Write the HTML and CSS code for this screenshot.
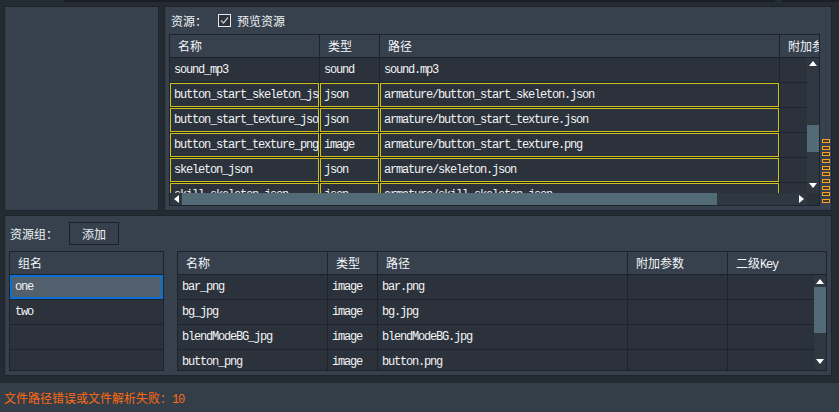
FILE: index.html
```html
<!DOCTYPE html>
<html lang="zh-CN">
<head>
<meta charset="utf-8">
<title>资源</title>
<link rel="stylesheet" href="styles.css">
</head>
<body>
<div class="topstrip"><span class="seg seg-a"></span><span class="seg seg-b"></span></div>
<div class="app">
  <div class="toprow">
    <div class="panel side"></div>
    <div class="panel res">
      <div class="res-head">
        <span class="label">资源：</span>
        <span class="check"><svg width="13" height="13" viewBox="0 0 13 13"><rect x="0.5" y="0.5" width="12" height="12" fill="#2b323b" stroke="#e8e8e8"/><polyline points="3,6.5 5.5,9 10,3.5" fill="none" stroke="#c8c8c8" stroke-width="1.2"/></svg></span>
        <span class="label">预览资源</span>
      </div>
      <div class="res-body">
        <div class="tbl tbl-res">
          <div class="thead">
            <div class="th r1">名称</div>
            <div class="th r2">类型</div>
            <div class="th r3">路径</div>
            <div class="th r4">附加参数</div>
          </div>
          <div class="tmain">
            <div class="rows">
              <div class="row"><div class="td r1 mono">sound_mp3</div><div class="td r2 mono">sound</div><div class="td r3 mono">sound.mp3</div><div class="td r4"></div></div>
              <div class="row hl"><div class="td r1 mono">button_start_skeleton_json</div><div class="td r2 mono">json</div><div class="td r3 mono">armature/button_start_skeleton.json</div><div class="td r4 plain"></div></div>
              <div class="row hl"><div class="td r1 mono">button_start_texture_json</div><div class="td r2 mono">json</div><div class="td r3 mono">armature/button_start_texture.json</div><div class="td r4 plain"></div></div>
              <div class="row hl"><div class="td r1 mono">button_start_texture_png</div><div class="td r2 mono">image</div><div class="td r3 mono">armature/button_start_texture.png</div><div class="td r4 plain"></div></div>
              <div class="row hl"><div class="td r1 mono">skeleton_json</div><div class="td r2 mono">json</div><div class="td r3 mono">armature/skeleton.json</div><div class="td r4 plain"></div></div>
              <div class="row hl"><div class="td r1 mono">skill_skeleton_json</div><div class="td r2 mono">json</div><div class="td r3 mono">armature/skill_skeleton.json</div><div class="td r4 plain"></div></div>
            </div>
            <div class="vscroll vs-res">
              <span class="arr-box"><span class="tri up"></span></span>
              <span class="vthumb"></span>
              <span class="fill"></span>
              <span class="arr-box"><span class="tri down"></span></span>
            </div>
          </div>
          <div class="hscroll">
            <span class="arr-box h"><span class="tri left"></span></span>
            <span class="hthumb"></span>
            <span class="fill"></span>
            <span class="arr-box h"><span class="tri right"></span></span>
            <span class="corner"></span>
          </div>
        </div>
        <div class="markers">
          <span></span><span></span><span></span><span></span><span></span>
          <span></span><span></span><span></span><span></span><span></span>
        </div>
      </div>
    </div>
  </div>

  <div class="panel groups">
    <div class="grp-head">
      <span class="label grp-label">资源组：</span>
      <button class="btn">添加</button>
    </div>
    <div class="grp-body">
      <div class="tbl tbl-grp">
        <div class="thead">
          <div class="th g1">组名</div>
        </div>
        <div class="rows">
          <div class="row"><div class="td g1 mono sel">one</div></div>
          <div class="row"><div class="td g1 mono">two</div></div>
          <div class="row"><div class="td g1"></div></div>
          <div class="row"><div class="td g1"></div></div>
        </div>
      </div>
      <div class="tbl tbl-items">
        <div class="thead">
          <div class="th b1">名称</div>
          <div class="th b2">类型</div>
          <div class="th b3">路径</div>
          <div class="th b4">附加参数</div>
          <div class="th b5 last">二级<span class="mono">Key</span></div>
        </div>
        <div class="tmain">
          <div class="rows">
            <div class="row"><div class="td b1 mono">bar_png</div><div class="td b2 mono">image</div><div class="td b3 mono">bar.png</div><div class="td b4"></div><div class="td b5"></div></div>
            <div class="row"><div class="td b1 mono">bg_jpg</div><div class="td b2 mono">image</div><div class="td b3 mono">bg.jpg</div><div class="td b4"></div><div class="td b5"></div></div>
            <div class="row"><div class="td b1 mono">blendModeBG_jpg</div><div class="td b2 mono">image</div><div class="td b3 mono">blendModeBG.jpg</div><div class="td b4"></div><div class="td b5"></div></div>
            <div class="row"><div class="td b1 mono">button_png</div><div class="td b2 mono">image</div><div class="td b3 mono">button.png</div><div class="td b4"></div><div class="td b5"></div></div>
          </div>
          <div class="vscroll vs-items">
            <span class="arr-box"><span class="tri up"></span></span>
            <span class="vthumb"></span>
            <span class="fill"></span>
            <span class="arr-box"><span class="tri down"></span></span>
          </div>
        </div>
      </div>
    </div>
  </div>
</div>
<div class="status">文件路径错误或文件解析失败：<span class="mono">10</span></div>
</body>
</html>
```

FILE: styles.css
```css
* { box-sizing: border-box; }

html, body {
  margin: 0;
  padding: 0;
}

body {
  width: 839px;
  height: 412px;
  overflow: hidden;
  background: #252b33;
  color: #f0f2f4;
  font-family: "Noto Sans CJK SC", "Noto Sans", sans-serif;
  font-size: 12px;
  line-height: 1;
}

.mono {
  font-family: "Liberation Mono", "Noto Sans CJK SC", monospace;
  letter-spacing: -1.2px;
}

/* strip at the very top */
.topstrip {
  display: flex;
  height: 2px;
}
.seg { display: block; height: 2px; background: #1a1f25; }
.seg-a { margin-left: 64px; width: 711px; }
.seg-b { margin-left: 7px; flex: 1; }

.app {
  padding: 4px 7px 0 4px;
}

.panel {
  background: #36414d;
  border: 1px solid #1e242b;
}

.toprow {
  display: flex;
  gap: 5px;
  height: 205px;
}

.side { width: 155px; }

.res {
  width: 668px;
  display: flex;
  flex-direction: column;
}

.res-head {
  display: flex;
  align-items: center;
  height: 27px;
  padding-left: 6px;
}
.label { white-space: nowrap; color: #f0f2f4; }
.check {
  display: flex;
  margin-left: 11px;
  margin-right: 6px;
}
.check svg { display: block; }

.res-body {
  display: flex;
  padding-left: 4px;
  gap: 2px;
}

/* generic table */
.tbl {
  border: 1px solid #1e242b;
  background: #2b323b;
  display: flex;
  flex-direction: column;
  overflow: hidden;
  flex: none;
}
.thead {
  display: flex;
  height: 23px;
  flex: none;
  background: #36414d;
  border-bottom: 1px solid #1e242b;
  overflow: hidden;
}
.th {
  flex: none;
  height: 22px;
  line-height: 22px;
  padding-left: 8px;
  border-right: 1px solid #1e242b;
  white-space: nowrap;
  overflow: hidden;
  color: #f4f6f8;
}
.th.last { border-right: 0; }

.tmain {
  display: flex;
  flex: 1;
  min-height: 0;
}
.rows {
  flex: 1;
  min-width: 0;
  overflow: hidden;
}
.row {
  display: flex;
  height: 25px;
  border-bottom: 1px solid #1e242b;
}
.td {
  flex: none;
  height: 24px;
  line-height: 24px;
  padding-left: 4px;
  border-right: 1px solid #1e242b;
  white-space: nowrap;
  overflow: hidden;
  text-overflow: clip;
  color: #f2f4f6;
}
.hl .td { box-shadow: inset 0 0 0 1px #cdbf1c; }
.hl .td.plain { box-shadow: none; }

/* resource table (top) */
.tbl-res { width: 651px; height: 172px; }
.r1 { width: 150px; }
.r2 { width: 60px; }
.r3 { width: 400px; }
.r4 { width: 60px; border-right: 0; }

.vscroll {
  width: 12px;
  flex: none;
  background: #2f3841;
  display: flex;
  flex-direction: column;
}
.arr-box {
  display: flex;
  align-items: center;
  justify-content: center;
  flex: none;
  width: 12px;
  height: 10px;
}
.arr-box.h { height: 12px; }
.fill { flex: 1; }
.vthumb { display: block; background: #536a77; flex: none; }
.vs-res .vthumb { margin-top: 59px; height: 27px; }
.vs-res .arr-box:first-child { height: 8px; align-items: flex-end; }
.vs-res .arr-box:last-child { height: 12px; align-items: flex-start; padding-top: 2px; }

.tri { display: block; width: 0; height: 0; }
.tri.up {
  border-left: 4px solid transparent;
  border-right: 4px solid transparent;
  border-bottom: 5px solid #ffffff;
}
.tri.down {
  border-left: 4px solid transparent;
  border-right: 4px solid transparent;
  border-top: 5px solid #ffffff;
}
.tri.left {
  border-top: 4px solid transparent;
  border-bottom: 4px solid transparent;
  border-right: 5px solid #ffffff;
}
.tri.right {
  border-top: 4px solid transparent;
  border-bottom: 4px solid transparent;
  border-left: 5px solid #ffffff;
}

.hscroll {
  display: flex;
  height: 12px;
  flex: none;
  background: #2f3841;
}
.hthumb { display: block; width: 535px; background: #536a77; }
.corner { display: block; width: 12px; background: #2a3139; }

.markers {
  display: flex;
  flex-direction: column;
  gap: 2.67px;
  margin-top: 105px;
}
.markers span {
  display: block;
  width: 8px;
  height: 4px;
  border: 1px solid #f2a12c;
  background: #4a3a22;
}

/* bottom panel */
.groups {
  margin-top: 4px;
  height: 161px;
  width: 828px;
  padding: 6px 4px 0 4px;
}
.grp-head {
  display: flex;
  align-items: center;
  height: 23px;
}
.grp-label { margin-left: 1px; }
.btn {
  margin-left: 11px;
  width: 50px;
  height: 23px;
  padding: 0;
  background: #36414d;
  border: 1px solid #1c2128;
  color: #f0f2f4;
  font-family: "Noto Sans CJK SC", sans-serif;
  font-size: 12px;
  line-height: 21px;
}
.grp-body {
  display: flex;
  gap: 13px;
  margin-top: 6px;
}

.tbl-grp { width: 155px; height: 120px; }
.g1 { width: 153px; border-right: 0; }
.td.g1 { padding-left: 5px; }
.td.sel {
  background: #52606d;
  box-shadow: inset 0 0 0 2px #0b6fd6;
}

.tbl-items { width: 650px; height: 120px; }
.b1 { width: 150px; }
.b2 { width: 50px; }
.b3 { width: 250px; }
.b4 { width: 100px; }
.b5 { width: 98px; }
.td.b5 { border-right: 0; }
.vs-items .arr-box:first-child { height: 9px; align-items: flex-end; }
.vs-items .vthumb { margin-top: 3px; height: 46px; }
.vs-items .arr-box:last-child { height: 12px; align-items: flex-start; padding-top: 1px; }

/* status bar */
.status {
  margin-top: 7px;
  height: 29px;
  line-height: 29px;
  padding-left: 4px;
  background: #343e49;
  color: #ff6a10;
  white-space: nowrap;
}
```
